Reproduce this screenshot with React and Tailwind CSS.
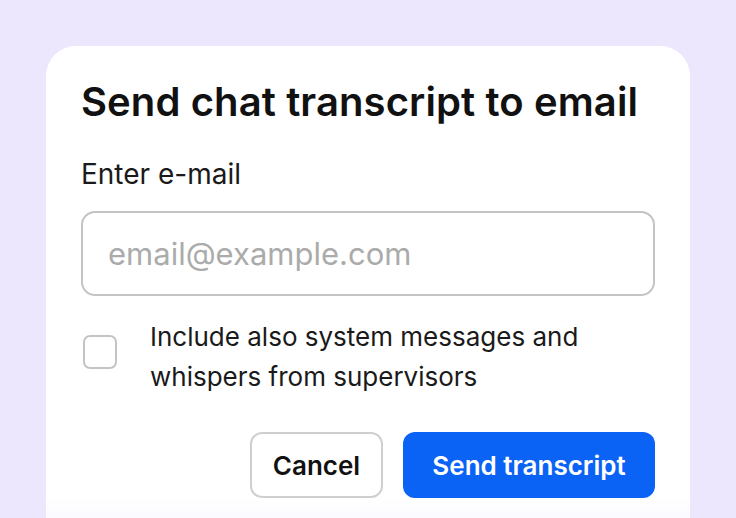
import React, { useState } from 'react';

export default function App() {
  const [email, setEmail] = useState('');
  const [withSystem, setWithSystem] = useState(false);

  return (
    <div
      className="w-[736px] h-[518px] overflow-hidden bg-[#ece7fd] pt-[46px] pl-[46px]"
      style={{ fontFamily: 'Inter, "Noto Sans", sans-serif' }}
    >
      <div className="w-[644px] h-[500px] rounded-t-[30px] bg-gradient-to-b from-white from-90% to-[#f6f3fe] px-[35px] pt-[32px]">
        <h2 className="text-[40px] leading-[48px] font-semibold text-[#111] tracking-[0.1px] whitespace-nowrap">
          Send chat transcript to email
        </h2>

        <label className="block mt-[30px] text-[28px] leading-[36px] text-[#1a1a1a]">
          Enter e-mail
        </label>
        <input
          type="email"
          value={email}
          onChange={(e) => setEmail(e.target.value)}
          placeholder="email@example.com"
          className="mt-[19px] w-full h-[85px] rounded-[14px] border-2 border-[#c4c4c4] px-[25px] text-[31px] text-[#111] placeholder:text-[#ababab] outline-none"
        />

        <div className="flex items-start mt-[21px]">
          <button
            onClick={() => setWithSystem(!withSystem)}
            className={`mt-[18px] ml-[2px] w-[34px] h-[34px] shrink-0 rounded-[7px] border-2 ${
              withSystem ? 'border-[#0b63f6] bg-[#0b63f6]' : 'border-[#c4c4c4] bg-white'
            }`}
          />
          <p className="ml-[33px] text-[26px] leading-[40px] text-[#1a1a1a]">
            Include also system messages and
            <br />
            whispers from supervisors
          </p>
        </div>

        <div className="flex justify-end gap-[20px] mt-[35px]">
          <button className="w-[133px] h-[66px] rounded-[12px] border-2 border-[#cfcfcf] bg-white text-[26px] font-semibold text-[#111]">
            Cancel
          </button>
          <button className="w-[252px] h-[66px] rounded-[12px] bg-[#0b63f6] text-[26px] font-semibold text-white">
            Send transcript
          </button>
        </div>
      </div>
    </div>
  );
}
